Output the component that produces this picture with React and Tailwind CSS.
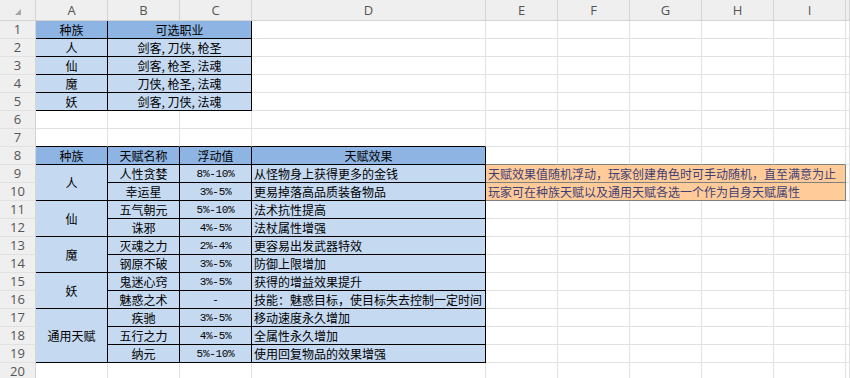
import React from 'react';

const LETTERS = ['A', 'B', 'C', 'D', 'E', 'F', 'G', 'H', 'I', ''];

const BLACK = [
  { r1: 1, r2: 5, c1: 1, c2: 3 },
  { r1: 8, r2: 19, c1: 1, c2: 4 },
];
const INPUT = [{ r1: 9, r2: 10, c1: 5, c2: 9 }];

const inRange = (list, r, c) => list.some((g) => r >= g.r1 && r <= g.r2 && c >= g.c1 && c <= g.c2);

const RIGHT = {
  black: 'border-r-black',
  input: 'border-r-[#7f7f7f]',
  grid: 'border-r-[#e1e1e1]',
};
const BOTTOM = {
  black: 'border-b-black',
  input: 'border-b-[#7f7f7f]',
  grid: 'border-b-[#e1e1e1]',
};
const ROWSPAN = { 1: '', 2: 'row-span-2', 3: 'row-span-3' };
const COLSPAN = { 1: '', 2: 'col-span-2', 5: 'col-span-5' };
const FILL = {
  head: 'bg-[#8db4e2]',
  body: 'bg-[#c5d9f1]',
  input: 'bg-[#ffcc99] text-[#3f3f76]',
  none: 'bg-white',
};

const edge = (r, c, r2, c2) => {
  if (inRange(BLACK, r, c) || inRange(BLACK, r2, c2)) return 'black';
  if (inRange(INPUT, r, c) || inRange(INPUT, r2, c2)) return 'input';
  return 'grid';
};

// content: [row, col, text, fill, align, rowSpan, colSpan]
const content = [
  [1, 1, '种族', 'head', 'c'],
  [1, 2, '可选职业', 'head', 'c', 1, 2],
  [2, 1, '人', 'body', 'c'],
  [2, 2, '剑客, 刀侠, 枪圣', 'body', 'c', 1, 2],
  [3, 1, '仙', 'body', 'c'],
  [3, 2, '剑客, 枪圣, 法魂', 'body', 'c', 1, 2],
  [4, 1, '魔', 'body', 'c'],
  [4, 2, '刀侠, 枪圣, 法魂', 'body', 'c', 1, 2],
  [5, 1, '妖', 'body', 'c'],
  [5, 2, '剑客, 刀侠, 法魂', 'body', 'c', 1, 2],
  [8, 1, '种族', 'head', 'c'],
  [8, 2, '天赋名称', 'head', 'c'],
  [8, 3, '浮动值', 'head', 'c'],
  [8, 4, '天赋效果', 'head', 'c'],
  [9, 1, '人', 'body', 'c', 2],
  [9, 2, '人性贪婪', 'body', 'c'],
  [9, 3, '8%-10%', 'body', 'n'],
  [9, 4, '从怪物身上获得更多的金钱', 'body', 'l'],
  [9, 5, '天赋效果值随机浮动，玩家创建角色时可手动随机，直至满意为止', 'input', 'l', 1, 5],
  [10, 2, '幸运星', 'body', 'c'],
  [10, 3, '3%-5%', 'body', 'n'],
  [10, 4, '更易掉落高品质装备物品', 'body', 'l'],
  [10, 5, '玩家可在种族天赋以及通用天赋各选一个作为自身天赋属性', 'input', 'l', 1, 5],
  [11, 1, '仙', 'body', 'c', 2],
  [11, 2, '五气朝元', 'body', 'c'],
  [11, 3, '5%-10%', 'body', 'n'],
  [11, 4, '法术抗性提高', 'body', 'l'],
  [12, 2, '诛邪', 'body', 'c'],
  [12, 3, '4%-5%', 'body', 'n'],
  [12, 4, '法杖属性增强', 'body', 'l'],
  [13, 1, '魔', 'body', 'c', 2],
  [13, 2, '灭魂之力', 'body', 'c'],
  [13, 3, '2%-4%', 'body', 'n'],
  [13, 4, '更容易出发武器特效', 'body', 'l'],
  [14, 2, '钢原不破', 'body', 'c'],
  [14, 3, '3%-5%', 'body', 'n'],
  [14, 4, '防御上限增加', 'body', 'l'],
  [15, 1, '妖', 'body', 'c', 2],
  [15, 2, '鬼迷心窍', 'body', 'c'],
  [15, 3, '3%-5%', 'body', 'n'],
  [15, 4, '获得的增益效果提升', 'body', 'l'],
  [16, 2, '魅惑之术', 'body', 'c'],
  [16, 3, '-', 'body', 'n'],
  [16, 4, '技能：魅惑目标，使目标失去控制一定时间', 'body', 'l'],
  [17, 1, '通用天赋', 'body', 'c', 3],
  [17, 2, '疾驰', 'body', 'c'],
  [17, 3, '3%-5%', 'body', 'n'],
  [17, 4, '移动速度永久增加', 'body', 'l'],
  [18, 2, '五行之力', 'body', 'c'],
  [18, 3, '4%-5%', 'body', 'n'],
  [18, 4, '全属性永久增加', 'body', 'l'],
  [19, 2, '纳元', 'body', 'c'],
  [19, 3, '5%-10%', 'body', 'n'],
  [19, 4, '使用回复物品的效果增强', 'body', 'l'],
];

const buildCells = () => {
  const cells = [];
  const taken = new Set();
  const byPos = {};
  content.forEach((item) => {
    byPos[`${item[0]}-${item[1]}`] = item;
  });
  for (let r = 1; r <= 20; r++) {
    for (let c = 1; c <= 10; c++) {
      if (taken.has(`${r}-${c}`)) continue;
      const item = byPos[`${r}-${c}`];
      const rs = item?.[5] || 1;
      const cs = item?.[6] || 1;
      for (let i = 0; i < rs; i++) for (let j = 0; j < cs; j++) taken.add(`${r + i}-${c + j}`);
      const lastC = c + cs - 1;
      const lastR = r + rs - 1;
      cells.push({
        row: r,
        key: `${r}-${c}`,
        text: item?.[2] || '',
        fill: item?.[3] || 'none',
        align: item?.[4] || 'c',
        rs,
        cs,
        right: edge(r, lastC, r, lastC + 1),
        bottom: edge(lastR, c, lastR + 1, c),
      });
    }
  }
  return cells;
};

const cells = buildCells();

const Cell = ({ cell }) => (
  <div
    className={`flex items-center overflow-visible whitespace-nowrap border-r border-b leading-none ${RIGHT[cell.right]} ${BOTTOM[cell.bottom]} ${FILL[cell.fill]} ${ROWSPAN[cell.rs]} ${COLSPAN[cell.cs]} ${
      cell.align === 'l' ? 'justify-start pl-[2px]' : 'justify-center'
    } ${cell.align === 'n' ? "font-['Liberation_Mono',monospace] text-[11px] tracking-[-0.3px]" : 'text-[12px]'} ${
      cell.fill === 'input' ? '' : 'text-black'
    }`}
  >
    <span className="pt-[1px]">{cell.text}</span>
  </div>
);

export default function App() {
  return (
    <div className="h-[378px] w-[850px] overflow-hidden bg-white font-['Noto_Sans_CJK_SC','Noto_Sans',sans-serif]">
      <div className="grid grid-cols-[36px_72px_72px_72px_234px_72px_72px_72px_72px_72px_1fr] grid-rows-[21px_repeat(20,18px)]">
        <div className="flex items-start justify-start border-r border-b border-r-[#d4d4d4] border-b-[#d4d4d4] bg-[#efefef] pl-[15px] pt-[9px]">
          <svg width="6" height="6" viewBox="0 0 6 6">
            <polygon points="6,0 6,6 0,6" fill="#a6a6a6" />
          </svg>
        </div>
        {LETTERS.map((l, i) => (
          <div
            key={`h${i}`}
            className="flex items-center justify-center border-r border-b border-r-[#d4d4d4] border-b-[#d4d4d4] bg-[#efefef] pt-[1px] font-['Open_Sans','Liberation_Sans',sans-serif] text-[13px] text-[#555]"
          >
            {l}
          </div>
        ))}
        {Array.from({ length: 20 }, (_, idx) => idx + 1).map((r) => (
          <React.Fragment key={`row${r}`}>
            <div className="col-start-1 flex items-center justify-center border-r border-b border-r-[#d4d4d4] border-b-[#e1e1e1] bg-[#efefef] font-['Open_Sans','Liberation_Sans',sans-serif] text-[13px] text-[#555]">
              {r}
            </div>
            {cells
              .filter((c) => c.row === r)
              .map((cell) => (
                <Cell key={cell.key} cell={cell} />
              ))}
          </React.Fragment>
        ))}
      </div>
    </div>
  );
}
